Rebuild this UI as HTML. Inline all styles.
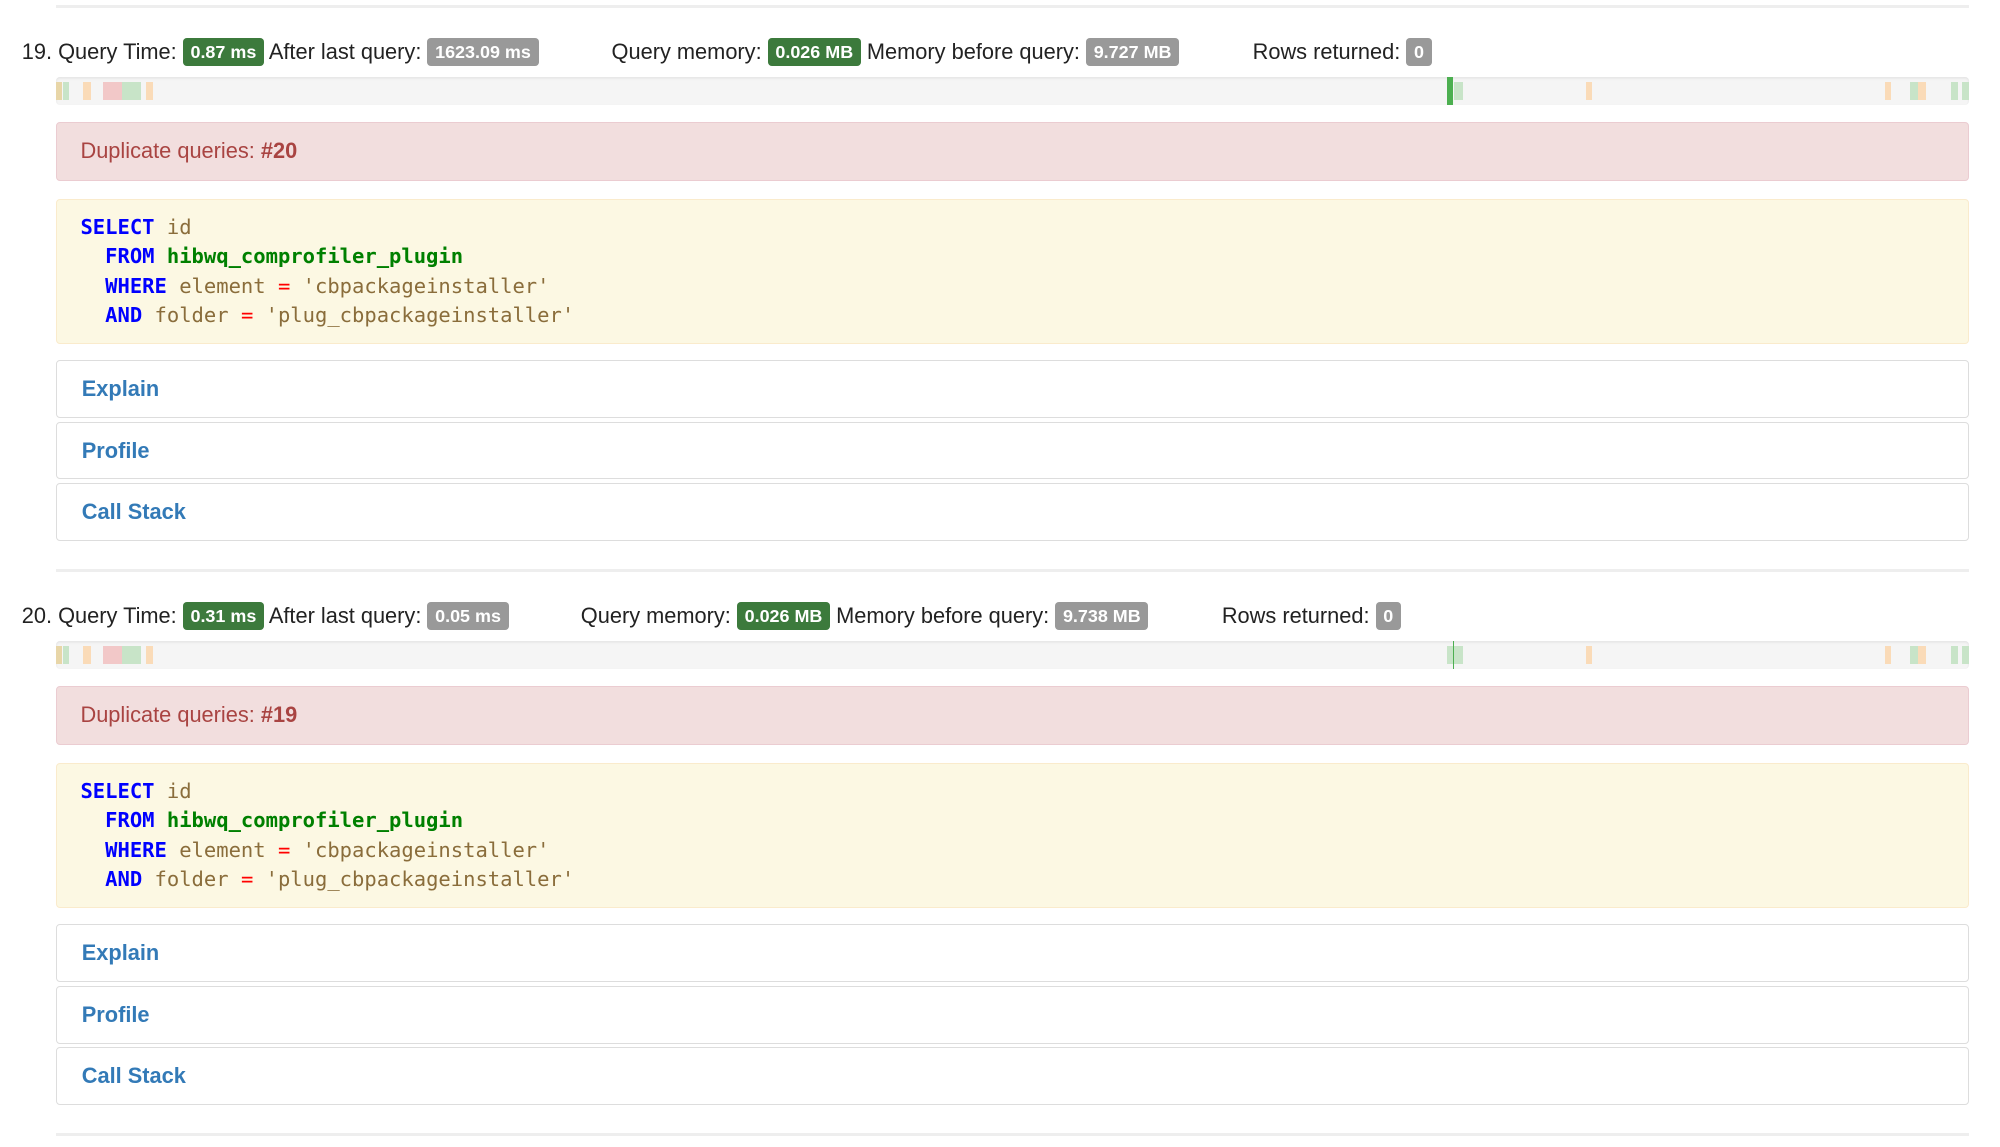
<!DOCTYPE html>
<html><head><meta charset="utf-8">
<style>
html,body{margin:0;padding:0;background:#fff;}
body{width:1560px;height:895px;overflow:hidden;zoom:1.2821;position:relative;font-family:"Liberation Sans",Arial,sans-serif;color:#222;}
.abs{position:absolute;}
.hr{position:absolute;left:44px;width:1492px;height:2px;background:#eee;}
.head{position:absolute;left:17px;height:24px;font-size:17px;line-height:24px;white-space:nowrap;}
.b{display:inline-block;color:#fff;font-weight:bold;font-size:14px;line-height:22px;padding:0 6px;border-radius:3px;vertical-align:1px;}
.g{background:#3c7a3c;}
.gr{background:#999;}
.tl{position:absolute;left:44px;width:1492px;height:22px;background:#f5f5f5;border-radius:3px;box-shadow:inset 0 1px 2px rgba(0,0,0,.08);overflow:hidden;}
.tl i{position:absolute;top:4px;height:14px;}
.dup{position:absolute;left:44px;width:1490px;height:44px;background:#f2dede;border:1px solid #ebccd1;border-radius:3px;color:#a94442;font-size:17px;line-height:44px;padding-left:18px;box-sizing:border-box;width:1492px;height:46px;}
.code{position:absolute;left:44px;width:1492px;height:113px;box-sizing:border-box;background:#fcf8e3;border:1px solid #faebcc;border-radius:3px;font-family:"DejaVu Sans Mono","Liberation Mono",monospace;font-size:16px;line-height:23px;padding:10px 0 0 18px;white-space:pre;color:#8a6d3b;}
.k{color:#0000ff;font-weight:bold;}
.t{color:#008000;font-weight:bold;}
.o{color:#ff0000;}
.p{position:absolute;left:44px;width:1492px;height:45px;box-sizing:border-box;border:1px solid #ddd;border-radius:3px;color:#337ab7;font-weight:bold;font-size:17px;line-height:43px;padding-left:19px;}
</style></head><body>

<div class="hr" style="top:4px"></div>

<div class="head" style="top:29px">19. Query Time: <span class="b g">0.87 ms</span> After last query: <span class="b gr">1623.09 ms</span></div>
<div class="head" style="top:29px;left:477px">Query memory: <span class="b g">0.026 MB</span> Memory before query: <span class="b gr">9.727 MB</span></div>
<div class="head" style="top:29px;left:977px">Rows returned: <span class="b gr">0</span></div>

<div class="tl" style="top:60px">
<i style="left:0;width:4px;background:#e8d6a8"></i><i style="left:5px;width:5px;background:#c8e4c8"></i>
<i style="left:21px;width:6px;background:#fadbb8"></i>
<i style="left:36px;width:15px;background:#f2c8c8"></i><i style="left:51px;width:10px;background:#c8e4c8"></i><i style="left:61px;width:5px;background:#c8e4c8"></i><i style="left:70px;width:5px;background:#fadbb8"></i>
<i style="left:1085px;width:4px;top:0;height:22px;background:#4caf50"></i><i style="left:1090px;width:7px;background:#c8e4c8"></i>
<i style="left:1193px;width:5px;background:#fadbb8"></i>
<i style="left:1426px;width:5px;background:#fadbb8"></i>
<i style="left:1446px;width:6px;background:#c8e4c8"></i><i style="left:1452px;width:6px;background:#fadbb8"></i>
<i style="left:1478px;width:5px;background:#c8e4c8"></i><i style="left:1486px;width:6px;background:#c8e4c8"></i>
</div>

<div class="dup" style="top:95px">Duplicate queries: <b>#20</b></div>

<div class="code" style="top:155px"><span class="k">SELECT</span> id
  <span class="k">FROM</span> <span class="t">hibwq_comprofiler_plugin</span>
  <span class="k">WHERE</span> element <span class="o">=</span> 'cbpackageinstaller'
  <span class="k">AND</span> folder <span class="o">=</span> 'plug_cbpackageinstaller'</div>

<div class="p" style="top:281px">Explain</div>
<div class="p" style="top:329px">Profile</div>
<div class="p" style="top:377px">Call Stack</div>

<div class="hr" style="top:444px"></div>

<div class="head" style="top:469px">20. Query Time: <span class="b g">0.31 ms</span> After last query: <span class="b gr">0.05 ms</span></div>
<div class="head" style="top:469px;left:453px">Query memory: <span class="b g">0.026 MB</span> Memory before query: <span class="b gr">9.738 MB</span></div>
<div class="head" style="top:469px;left:953px">Rows returned: <span class="b gr">0</span></div>

<div class="tl" style="top:500px">
<i style="left:0;width:4px;background:#e8d6a8"></i><i style="left:5px;width:5px;background:#c8e4c8"></i>
<i style="left:21px;width:6px;background:#fadbb8"></i>
<i style="left:36px;width:15px;background:#f2c8c8"></i><i style="left:51px;width:10px;background:#c8e4c8"></i><i style="left:61px;width:5px;background:#c8e4c8"></i><i style="left:70px;width:5px;background:#fadbb8"></i>
<i style="left:1085px;width:12px;background:#c8e4c8"></i><i style="left:1089px;width:1px;top:0;height:22px;background:#4caf50"></i>
<i style="left:1193px;width:5px;background:#fadbb8"></i>
<i style="left:1426px;width:5px;background:#fadbb8"></i>
<i style="left:1446px;width:6px;background:#c8e4c8"></i><i style="left:1452px;width:6px;background:#fadbb8"></i>
<i style="left:1478px;width:5px;background:#c8e4c8"></i><i style="left:1486px;width:6px;background:#c8e4c8"></i>
</div>

<div class="dup" style="top:535px">Duplicate queries: <b>#19</b></div>

<div class="code" style="top:595px"><span class="k">SELECT</span> id
  <span class="k">FROM</span> <span class="t">hibwq_comprofiler_plugin</span>
  <span class="k">WHERE</span> element <span class="o">=</span> 'cbpackageinstaller'
  <span class="k">AND</span> folder <span class="o">=</span> 'plug_cbpackageinstaller'</div>

<div class="p" style="top:721px">Explain</div>
<div class="p" style="top:769px">Profile</div>
<div class="p" style="top:817px">Call Stack</div>

<div class="hr" style="top:884px"></div>
</body></html>
